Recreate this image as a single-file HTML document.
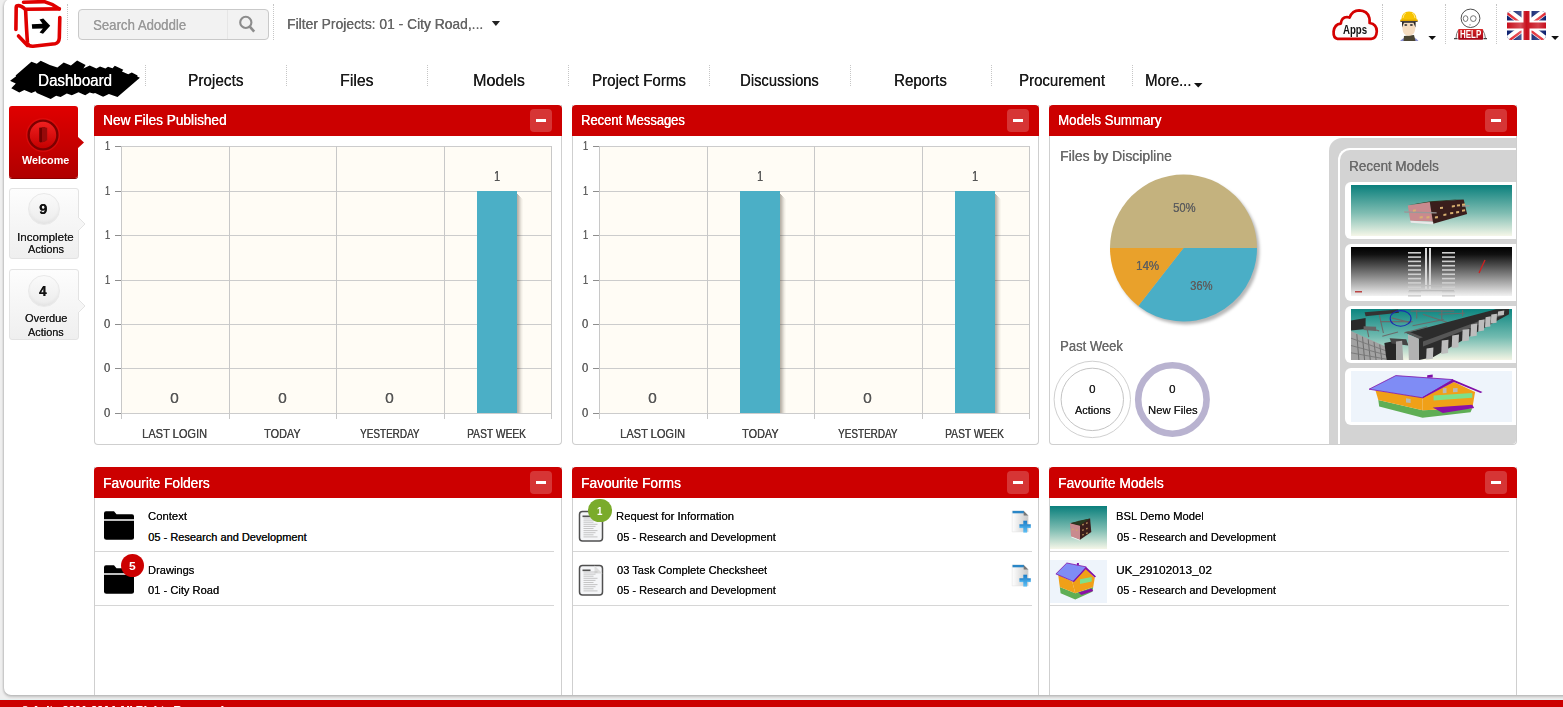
<!DOCTYPE html>
<html><head><meta charset="utf-8"><style>
*{box-sizing:border-box;margin:0;padding:0}
html,body{width:1563px;height:707px;overflow:hidden;background:#efefef;font-family:"Liberation Sans",sans-serif;position:relative}
.tx{position:absolute;white-space:nowrap;transform-origin:0 0;text-shadow:0.3px 0 0}
.a{position:absolute}
svg{position:absolute;overflow:visible}
.dots{position:absolute;width:0;border-left:1px dotted #c6c6c6}
.panel{position:absolute;background:#fff;border:1px solid #cfcfcf;border-top:0}
.ph{position:absolute;left:-1px;right:-1px;top:0;height:31px;background:#cc0000;border-radius:4px 4px 0 0}
.ph .b{position:absolute;right:10px;top:4px;width:22px;height:23px;background:#d63535;border-radius:4px}
.ph .b:after{content:"";position:absolute;left:6px;top:10px;width:10px;height:3px;background:#fff}
</style></head><body>
<div class="a" style="left:4px;top:-1px;width:1600px;height:696px;background:#fff;border-radius:7px;box-shadow:-1px 0 2px rgba(0,0,0,.12), 0 2px 3px rgba(0,0,0,.2)"></div>
<div class="a" style="left:0;top:699px;width:1563px;height:1px;background:#e4f0f0"></div>
<div class="a" style="left:0;top:700px;width:1563px;height:7px;background:#cc0000;overflow:hidden"></div>
<div class="tx" style="left:20.83px;top:704.20px;font-size:12px;line-height:14px;color:#fff;font-weight:bold;text-shadow:0.12px 0 0;transform:scaleX(0.9305);">© Asite 2001-2014 All Rights Reserved</div>
<div class="a" style="left:78px;top:9px;width:191px;height:31px;background:#f2f2f2;border:1px solid #c9c9c9;border-radius:4px"></div>
<div class="a" style="left:227px;top:10px;width:1px;height:29px;background:#e6e6e6"></div>
<svg style="left:0;top:0" width="70" height="52" viewBox="0 0 70 52">
 <g fill="none" stroke="#e00000" stroke-width="3.6" stroke-linecap="round" stroke-linejoin="round">
  <path d="M23.5,2.3 L44,1.6 Q52,3.5 59.3,8.9"/>
  <path d="M16.6,6 Q20,4.5 25.2,9.3 L59.3,8.9"/>
  <path d="M16.2,7 L15.9,29.5"/>
  <path d="M18.5,36 L27.5,45.4"/>
  <path d="M25.6,10 Q26.5,30 27.5,43 Q28,46.5 33,46.3 L55,43.8 Q59,43 59.3,38 L59.8,17.5"/>
 </g>
 <path d="M31.8,24.3 L42.5,23.8 L39.5,19.6 L43.3,18.6 L50.2,25.8 L43,33.8 L39.6,32.5 L42.8,28.5 L32.2,28.8 Z" fill="#000"/>
</svg>
<svg style="left:236px;top:13px" width="22" height="24" viewBox="0 0 22 24">
 <circle cx="9.8" cy="9.4" r="5.6" fill="none" stroke="#8c8c8c" stroke-width="2.1"/>
 <path d="M13.8,13.6 L18.2,18.6" stroke="#8c8c8c" stroke-width="2.6" stroke-linecap="butt"/>
</svg>
<svg style="left:490px;top:19px" width="12" height="9"><path d="M1.8,2 L10,2 L5.9,7 Z" fill="#222"/></svg>

<svg style="left:0;top:0" width="1563" height="50">
 <path d="M1337.5,38.8 Q1333.2,38 1333.6,31.5 Q1334.5,24.2 1340.8,23.6 Q1341.5,17.2 1347,17 Q1348.6,17 1349.6,17.6 Q1352.3,10.4 1359.2,10.4 Q1367.5,10.7 1369.3,17.8 Q1369.8,20 1369.6,23 Q1376.8,24.2 1376.8,31.2 Q1376.4,38.6 1371.2,38.8 Z" fill="#fcfcfc" stroke="#d40000" stroke-width="2.7" stroke-linejoin="round"/>
</svg>

<svg style="left:0;top:0" width="1563" height="50">
 <path d="M1400,41 Q1402,38.5 1405,37.5 L1414,37.5 Q1417,38.5 1418.5,41 Z" fill="#8d92d2"/>
 <path d="M1404,36 L1414,35 L1415.5,41 L1403.5,41 Z" fill="#4b4532"/>
 <path d="M1402.2,21.5 L1415.4,21.5 L1415.2,29 Q1414.5,35.8 1408.8,35.8 Q1403,35.8 1402.5,29 Z" fill="#f5dcc0"/>
 <path d="M1402,21.5 L1415.6,21.5 L1415.6,27.5 L1414.2,24.5 L1413.5,22.8 L1404,22.8 L1403.2,24.5 L1402,27.5 Z" fill="#2a2a2a"/>
 <ellipse cx="1405.8" cy="25" rx="1.5" ry="1.1" fill="#444"/>
 <ellipse cx="1411.4" cy="25" rx="1.5" ry="1.1" fill="#444"/>
 <path d="M1401.2,20 Q1401.5,11.8 1409,11.6 Q1416.5,11.8 1416.8,20 Z" fill="#f7c300"/>
 <path d="M1403,18 Q1403.5,13.5 1406,12.8 M1415,18 Q1414.5,13.5 1412,12.8" stroke="#fff3b0" stroke-width=".8" fill="none"/>
 <rect x="1400.2" y="19.6" width="17.6" height="1.9" fill="#e0a800"/>
 <rect x="1400.5" y="21.2" width="17" height=".8" fill="#2a2a40"/>
</svg>
<svg style="left:1427px;top:35px" width="11" height="7"><path d="M1.4,1 L9,1 L5.2,5 Z" fill="#111"/></svg>
<svg style="left:0;top:0" width="1563" height="50">
 <defs><linearGradient id="hg" x1="0" y1="0" x2="0" y2="1"><stop offset="0" stop-color="#d82828"/><stop offset="1" stop-color="#a00012"/></linearGradient></defs>
 <path d="M1458.5,30 Q1456,33 1456,38.5 M1482.5,30 Q1485,33 1485.5,38.5" stroke="#777" stroke-width="1" fill="none"/>
 <path d="M1454,38.6 L1457.5,38.6 M1483.5,38.6 L1487,38.6" stroke="#444" stroke-width="1.2"/>
 <ellipse cx="1470.5" cy="18.3" rx="9.4" ry="9.2" fill="#fff" stroke="#3a3a3a" stroke-width="0.9"/>
 <ellipse cx="1465.6" cy="18.6" rx="2.3" ry="2.9" fill="none" stroke="#666" stroke-width="0.9"/>
 <ellipse cx="1473.3" cy="18.6" rx="2.8" ry="2.9" fill="none" stroke="#666" stroke-width="0.9"/>
 <rect x="1469" y="24" width="2" height="1.6" fill="#ccc"/>
 <rect x="1458.2" y="29" width="24.9" height="10.8" rx="0.8" fill="url(#hg)"/>
</svg>
<svg style="left:1507px;top:11px" width="40" height="30" viewBox="0 0 40 30">
 <defs><clipPath id="fc"><rect x="0" y="0" width="39" height="29" rx="4.5"/></clipPath>
 <linearGradient id="fg" x1="0" y1="0" x2="1" y2="0"><stop offset="0" stop-color="#fff" stop-opacity="0"/><stop offset=".35" stop-color="#fff" stop-opacity=".25"/><stop offset=".5" stop-color="#fff" stop-opacity="0"/><stop offset=".8" stop-color="#fff" stop-opacity=".2"/><stop offset="1" stop-color="#fff" stop-opacity="0"/></linearGradient></defs>
 <g clip-path="url(#fc)">
  <rect width="39" height="29" fill="#0a1e6e"/>
  <path d="M0,0 L39,29 M39,0 L0,29" stroke="#fff" stroke-width="7"/>
  <path d="M0,0 L19.5,14.5 M39,29 L19.5,14.5" stroke="#e0202a" stroke-width="2.4" transform="translate(-1.2,1.2)"/>
  <path d="M39,0 L19.5,14.5 M0,29 L19.5,14.5" stroke="#e0202a" stroke-width="2.4" transform="translate(1.2,1.2)"/>
  <path d="M19.5,0 L19.5,29 M0,14.5 L39,14.5" stroke="#fff" stroke-width="10"/>
  <path d="M19.5,0 L19.5,29 M0,14.5 L39,14.5" stroke="#c8101e" stroke-width="6"/>
  <rect width="39" height="29" fill="url(#fg)"/>
 </g>
</svg>
<svg style="left:1550px;top:35px" width="11" height="7"><path d="M1.2,1 L9,1 L5.1,5 Z" fill="#111"/></svg>

<div class="tx" style="left:1460.48px;top:29.40px;font-size:10px;line-height:11px;color:#fff;font-weight:bold;text-shadow:0.12px 0 0;transform:scaleX(0.7938);text-shadow:none;">HELP</div>
<div class="tx" style="left:1343.26px;top:22.60px;font-size:12px;line-height:14px;color:#111;font-weight:bold;text-shadow:0.12px 0 0;transform:scaleX(0.8042);text-shadow:none;">Apps</div>
<div class="dots" style="left:67px;top:4px;height:36px"></div>
<div class="dots" style="left:273px;top:4px;height:36px"></div>
<div class="dots" style="left:1382px;top:4px;height:36px"></div>
<div class="dots" style="left:1445px;top:4px;height:40px"></div>
<div class="dots" style="left:1496px;top:4px;height:40px"></div>
<div class="tx" style="left:92.51px;top:16.00px;font-size:15px;line-height:17px;color:#9a9a9a;transform:scaleX(0.8780);">Search Adoddle</div>
<div class="tx" style="left:287.39px;top:14.80px;font-size:15px;line-height:17px;color:#666666;transform:scaleX(0.9224);">Filter Projects: 01 - City Road,...</div>
<div class="tx" style="left:188.08px;top:72.00px;font-size:16px;line-height:17px;color:#1a1a1a;transform:scaleX(0.9567);">Projects</div>
<div class="tx" style="left:340.13px;top:72.00px;font-size:16px;line-height:17px;color:#1a1a1a;transform:scaleX(0.9900);">Files</div>
<div class="tx" style="left:472.52px;top:72.00px;font-size:16px;line-height:17px;color:#1a1a1a;transform:scaleX(1.0028);">Models</div>
<div class="tx" style="left:592.09px;top:72.00px;font-size:16px;line-height:17px;color:#1a1a1a;transform:scaleX(0.9421);">Project Forms</div>
<div class="tx" style="left:739.82px;top:72.00px;font-size:16px;line-height:17px;color:#1a1a1a;transform:scaleX(0.9219);">Discussions</div>
<div class="tx" style="left:894.20px;top:72.00px;font-size:16px;line-height:17px;color:#1a1a1a;transform:scaleX(0.9398);">Reports</div>
<div class="tx" style="left:1019.30px;top:72.00px;font-size:16px;line-height:17px;color:#1a1a1a;transform:scaleX(0.9372);">Procurement</div>
<div class="tx" style="left:1145.31px;top:72.00px;font-size:16px;line-height:17px;color:#1a1a1a;transform:scaleX(0.9311);">More...</div>
<div class="dots" style="left:145px;top:65px;height:21px"></div>
<div class="dots" style="left:286px;top:65px;height:21px"></div>
<div class="dots" style="left:427px;top:65px;height:21px"></div>
<div class="dots" style="left:568px;top:65px;height:21px"></div>
<div class="dots" style="left:709px;top:65px;height:21px"></div>
<div class="dots" style="left:850px;top:65px;height:21px"></div>
<div class="dots" style="left:991px;top:65px;height:21px"></div>
<div class="dots" style="left:1132px;top:65px;height:21px"></div>
<svg style="left:0;top:0" width="160" height="110"><polygon points="10.4,80.5 16.2,76.3 15.6,75.6 31.4,61.7 36.8,63.8 40.7,60.8 49.8,65.0 57.4,67.5 63.7,62.6 70.9,65.6 77.1,60.6 85.6,64.9 83.4,68.4 89.7,65.6 96.4,68.4 100.0,66.6 105.4,68.4 108.0,66.8 112.5,68.3 114.8,65.8 123.3,69.8 121.9,71.6 128.2,74.3 131.8,72.5 137.6,75.6 137.2,76.5 139.9,77.8 117.5,97.1 108.9,94.0 103.1,96.7 95.1,93.1 93.3,93.5 89.7,92.6 85.2,95.3 78.5,92.2 71.8,95.3 66.8,93.5 60.6,97.1 56.1,95.8 50.7,98.9 36.8,93.1 35.5,91.3 31.4,93.1 24.3,89.9 19.3,92.6 11.3,88.2 15.8,83.5 10.4,81.0" fill="#000"/></svg>
<svg style="left:1193px;top:82px" width="11" height="7"><path d="M1,1 L9.5,1 L5.25,5.5 Z" fill="#111"/></svg>
<div class="tx" style="left:38.29px;top:71.90px;font-size:16px;line-height:17px;color:#fff;transform:scaleX(0.9444);">Dashboard</div>
<div class="a" style="left:9px;top:106px;width:69px;height:72px;border-radius:3px;background:linear-gradient(#e00000,#b00000);box-shadow:0 1px 0 #8a0000"></div>
<svg style="left:77px;top:135px" width="10" height="16"><path d="M0,1 L7,7.5 L0,14 Z" fill="#c80000"/></svg>
<svg style="left:25px;top:117px" width="36" height="36" viewBox="0 0 36 36"><defs><linearGradient id="wg" x1="0" y1="0" x2="0" y2="1"><stop offset="0" stop-color="#f02020"/><stop offset="1" stop-color="#c40000"/></linearGradient></defs><circle cx="18" cy="18" r="17" fill="#e81414" fill-opacity=".5"/><circle cx="18" cy="18" r="15.6" fill="#7c0000"/><circle cx="18" cy="18" r="13.2" fill="url(#wg)"/><path d="M14.2,10.8 L19.5,10.2 L20.8,11 L20.8,24 L15.5,25.6 L14.2,24.5 Z" fill="#6e0000"/><path d="M17,10.2 L22.2,10.8 L22.2,23.2 L17,25.6 Z" fill="#960a0a"/></svg>
<div class="tx" style="left:21.90px;top:153.70px;font-size:11px;line-height:12px;color:#fff;font-weight:bold;text-shadow:0.12px 0 0;transform:scaleX(0.9835);text-shadow:none;">Welcome</div>
<div class="a" style="left:9px;top:188px;width:70px;height:71px;border-radius:3px;background:linear-gradient(#fdfdfd,#efefef);border:1px solid #e3e3e3"></div>
<svg style="left:78px;top:217.3px" width="10" height="16"><path d="M0,0 L7,7 L0,14" fill="#f6f6f6" stroke="#e3e3e3" stroke-width="1"/></svg>
<div class="a" style="left:27.6px;top:193.3px;width:32px;height:32px;border-radius:50%;background:linear-gradient(#fafafa,#ececec);border:1px solid #e9e9e9;box-shadow:inset 0 -2px 3px rgba(0,0,0,.04)"></div>
<div class="tx" style="left:38.88px;top:200.80px;font-size:14px;line-height:16px;color:#111;font-weight:bold;transform:scaleX(1.0604);">9</div>
<div class="tx" style="left:17.16px;top:231.00px;font-size:11px;line-height:12px;color:#222;text-shadow:0.12px 0 0;transform:scaleX(1.0534);">Incomplete</div>
<div class="tx" style="left:28.30px;top:243.40px;font-size:11px;line-height:12px;color:#222;text-shadow:0.12px 0 0;transform:scaleX(0.9973);">Actions</div>
<div class="a" style="left:9px;top:269px;width:70px;height:71px;border-radius:3px;background:linear-gradient(#fdfdfd,#efefef);border:1px solid #e3e3e3"></div>
<svg style="left:78px;top:299.3px" width="10" height="16"><path d="M0,0 L7,7 L0,14" fill="#f6f6f6" stroke="#e3e3e3" stroke-width="1"/></svg>
<div class="a" style="left:27.6px;top:275.3px;width:32px;height:32px;border-radius:50%;background:linear-gradient(#fafafa,#ececec);border:1px solid #e9e9e9;box-shadow:inset 0 -2px 3px rgba(0,0,0,.04)"></div>
<div class="tx" style="left:39.20px;top:283.10px;font-size:14px;line-height:16px;color:#111;font-weight:bold;transform:scaleX(0.9613);">4</div>
<div class="tx" style="left:24.70px;top:312.30px;font-size:11px;line-height:12px;color:#222;text-shadow:0.12px 0 0;transform:scaleX(1.0050);">Overdue</div>
<div class="tx" style="left:28.40px;top:325.80px;font-size:11px;line-height:12px;color:#222;text-shadow:0.12px 0 0;transform:scaleX(0.9889);">Actions</div>
<div class="panel" style="left:94px;top:105px;width:468px;height:340px;border-radius:0 0 4px 4px"><div class="ph"><span class="b"></span></div></div>
<div class="tx" style="left:103.21px;top:112.20px;font-size:14px;line-height:16px;color:#fff;transform:scaleX(0.9735);">New Files Published</div>
<div class="panel" style="left:572px;top:105px;width:467px;height:340px;border-radius:0 0 4px 4px"><div class="ph"><span class="b"></span></div></div>
<div class="tx" style="left:581.26px;top:112.20px;font-size:14px;line-height:16px;color:#fff;transform:scaleX(0.9261);">Recent Messages</div>
<div class="panel" style="left:1049px;top:105px;width:468px;height:340px;border-radius:0 0 4px 4px"><div class="ph"><span class="b"></span></div></div>
<div class="tx" style="left:1058.44px;top:112.20px;font-size:14px;line-height:16px;color:#fff;transform:scaleX(0.9490);">Models Summary</div>
<div class="panel" style="left:94px;top:467px;width:468px;height:228px;border-bottom:0;border-radius:0 0 0 0"><div class="ph"><span class="b"></span></div></div>
<div class="tx" style="left:103.40px;top:475.00px;font-size:14px;line-height:16px;color:#fff;transform:scaleX(0.9785);">Favourite Folders</div>
<div class="panel" style="left:572px;top:467px;width:467px;height:228px;border-bottom:0;border-radius:0 0 0 0"><div class="ph"><span class="b"></span></div></div>
<div class="tx" style="left:581.40px;top:475.00px;font-size:14px;line-height:16px;color:#fff;transform:scaleX(0.9790);">Favourite Forms</div>
<div class="panel" style="left:1049px;top:467px;width:468px;height:228px;border-bottom:0;border-radius:0 0 0 0"><div class="ph"><span class="b"></span></div></div>
<div class="tx" style="left:1058.40px;top:475.00px;font-size:14px;line-height:16px;color:#fff;transform:scaleX(0.9833);">Favourite Models</div>
<svg style="left:0;top:0" width="1563" height="450"><rect x="121" y="146" width="430" height="267" fill="#fffcf5"/><rect x="121" y="146" width="431" height="1" fill="#cccccc"/><rect x="115" y="146" width="6" height="1" fill="#8e8e8e"/><rect x="121" y="191" width="431" height="1" fill="#cccccc"/><rect x="115" y="191" width="6" height="1" fill="#8e8e8e"/><rect x="121" y="235" width="431" height="1" fill="#cccccc"/><rect x="115" y="235" width="6" height="1" fill="#8e8e8e"/><rect x="121" y="280" width="431" height="1" fill="#cccccc"/><rect x="115" y="280" width="6" height="1" fill="#8e8e8e"/><rect x="121" y="324" width="431" height="1" fill="#cccccc"/><rect x="115" y="324" width="6" height="1" fill="#8e8e8e"/><rect x="121" y="368" width="431" height="1" fill="#cccccc"/><rect x="115" y="368" width="6" height="1" fill="#8e8e8e"/><rect x="121" y="413" width="431" height="1" fill="#cccccc"/><rect x="115" y="413" width="6" height="1" fill="#8e8e8e"/><rect x="121" y="146" width="1" height="273" fill="#c8c8c8"/><rect x="229" y="146" width="1" height="273" fill="#c8c8c8"/><rect x="336" y="146" width="1" height="273" fill="#c8c8c8"/><rect x="444" y="146" width="1" height="273" fill="#c8c8c8"/><rect x="551" y="146" width="1" height="273" fill="#c8c8c8"/><rect x="517" y="194" width="1" height="219" fill="#3a3020" fill-opacity="0.36"/><rect x="518" y="195" width="1" height="218" fill="#3a3020" fill-opacity="0.3"/><rect x="519" y="196" width="1" height="217" fill="#3a3020" fill-opacity="0.22"/><rect x="520" y="197" width="1" height="216" fill="#3a3020" fill-opacity="0.14"/><rect x="521" y="198" width="1" height="215" fill="#3a3020" fill-opacity="0.07"/><rect x="522" y="199" width="1" height="214" fill="#3a3020" fill-opacity="0.03"/><rect x="477" y="191" width="40" height="222" fill="#4bafc6"/></svg>
<div class="tx" style="left:104.71px;top:139.00px;font-size:12px;line-height:14px;color:#606060;text-shadow:0.12px 0 0;transform:scaleX(0.7663);">1</div>
<div class="tx" style="left:104.71px;top:184.00px;font-size:12px;line-height:14px;color:#606060;text-shadow:0.12px 0 0;transform:scaleX(0.7663);">1</div>
<div class="tx" style="left:104.71px;top:228.00px;font-size:12px;line-height:14px;color:#606060;text-shadow:0.12px 0 0;transform:scaleX(0.7663);">1</div>
<div class="tx" style="left:104.71px;top:273.00px;font-size:12px;line-height:14px;color:#606060;text-shadow:0.12px 0 0;transform:scaleX(0.7663);">1</div>
<div class="tx" style="left:104.35px;top:317.30px;font-size:12px;line-height:14px;color:#606060;text-shadow:0.12px 0 0;transform:scaleX(0.9375);">0</div>
<div class="tx" style="left:104.35px;top:361.30px;font-size:12px;line-height:14px;color:#606060;text-shadow:0.12px 0 0;transform:scaleX(0.9375);">0</div>
<div class="tx" style="left:104.35px;top:406.30px;font-size:12px;line-height:14px;color:#606060;text-shadow:0.12px 0 0;transform:scaleX(0.9375);">0</div>
<div class="tx" style="left:142.26px;top:425.70px;font-size:13px;line-height:15px;color:#444;transform:scaleX(0.8514);">LAST LOGIN</div>
<div class="tx" style="left:264.03px;top:425.70px;font-size:13px;line-height:15px;color:#444;transform:scaleX(0.8366);">TODAY</div>
<div class="tx" style="left:360.00px;top:425.70px;font-size:13px;line-height:15px;color:#444;transform:scaleX(0.7647);">YESTERDAY</div>
<div class="tx" style="left:467.43px;top:425.70px;font-size:13px;line-height:15px;color:#444;transform:scaleX(0.7897);">PAST WEEK</div>
<div class="tx" style="left:170.38px;top:388.80px;font-size:15px;line-height:17px;color:#555;transform:scaleX(1.0417);">0</div>
<div class="tx" style="left:277.88px;top:388.80px;font-size:15px;line-height:17px;color:#555;transform:scaleX(1.0417);">0</div>
<div class="tx" style="left:385.38px;top:388.80px;font-size:15px;line-height:17px;color:#555;transform:scaleX(1.0417);">0</div>
<div class="tx" style="left:494.16px;top:167.00px;font-size:15px;line-height:17px;color:#555;transform:scaleX(0.7050);">1</div>
<svg style="left:0;top:0" width="1563" height="450"><rect x="599" y="146" width="430" height="267" fill="#fffcf5"/><rect x="599" y="146" width="431" height="1" fill="#cccccc"/><rect x="593" y="146" width="6" height="1" fill="#8e8e8e"/><rect x="599" y="191" width="431" height="1" fill="#cccccc"/><rect x="593" y="191" width="6" height="1" fill="#8e8e8e"/><rect x="599" y="235" width="431" height="1" fill="#cccccc"/><rect x="593" y="235" width="6" height="1" fill="#8e8e8e"/><rect x="599" y="280" width="431" height="1" fill="#cccccc"/><rect x="593" y="280" width="6" height="1" fill="#8e8e8e"/><rect x="599" y="324" width="431" height="1" fill="#cccccc"/><rect x="593" y="324" width="6" height="1" fill="#8e8e8e"/><rect x="599" y="368" width="431" height="1" fill="#cccccc"/><rect x="593" y="368" width="6" height="1" fill="#8e8e8e"/><rect x="599" y="413" width="431" height="1" fill="#cccccc"/><rect x="593" y="413" width="6" height="1" fill="#8e8e8e"/><rect x="599" y="146" width="1" height="273" fill="#c8c8c8"/><rect x="707" y="146" width="1" height="273" fill="#c8c8c8"/><rect x="814" y="146" width="1" height="273" fill="#c8c8c8"/><rect x="922" y="146" width="1" height="273" fill="#c8c8c8"/><rect x="1029" y="146" width="1" height="273" fill="#c8c8c8"/><rect x="780" y="194" width="1" height="219" fill="#3a3020" fill-opacity="0.36"/><rect x="781" y="195" width="1" height="218" fill="#3a3020" fill-opacity="0.3"/><rect x="782" y="196" width="1" height="217" fill="#3a3020" fill-opacity="0.22"/><rect x="783" y="197" width="1" height="216" fill="#3a3020" fill-opacity="0.14"/><rect x="784" y="198" width="1" height="215" fill="#3a3020" fill-opacity="0.07"/><rect x="785" y="199" width="1" height="214" fill="#3a3020" fill-opacity="0.03"/><rect x="740" y="191" width="40" height="222" fill="#4bafc6"/><rect x="995" y="194" width="1" height="219" fill="#3a3020" fill-opacity="0.36"/><rect x="996" y="195" width="1" height="218" fill="#3a3020" fill-opacity="0.3"/><rect x="997" y="196" width="1" height="217" fill="#3a3020" fill-opacity="0.22"/><rect x="998" y="197" width="1" height="216" fill="#3a3020" fill-opacity="0.14"/><rect x="999" y="198" width="1" height="215" fill="#3a3020" fill-opacity="0.07"/><rect x="1000" y="199" width="1" height="214" fill="#3a3020" fill-opacity="0.03"/><rect x="955" y="191" width="40" height="222" fill="#4bafc6"/></svg>
<div class="tx" style="left:582.71px;top:139.00px;font-size:12px;line-height:14px;color:#606060;text-shadow:0.12px 0 0;transform:scaleX(0.7663);">1</div>
<div class="tx" style="left:582.71px;top:184.00px;font-size:12px;line-height:14px;color:#606060;text-shadow:0.12px 0 0;transform:scaleX(0.7663);">1</div>
<div class="tx" style="left:582.71px;top:228.00px;font-size:12px;line-height:14px;color:#606060;text-shadow:0.12px 0 0;transform:scaleX(0.7663);">1</div>
<div class="tx" style="left:582.71px;top:273.00px;font-size:12px;line-height:14px;color:#606060;text-shadow:0.12px 0 0;transform:scaleX(0.7663);">1</div>
<div class="tx" style="left:582.35px;top:317.30px;font-size:12px;line-height:14px;color:#606060;text-shadow:0.12px 0 0;transform:scaleX(0.9375);">0</div>
<div class="tx" style="left:582.35px;top:361.30px;font-size:12px;line-height:14px;color:#606060;text-shadow:0.12px 0 0;transform:scaleX(0.9375);">0</div>
<div class="tx" style="left:582.35px;top:406.30px;font-size:12px;line-height:14px;color:#606060;text-shadow:0.12px 0 0;transform:scaleX(0.9375);">0</div>
<div class="tx" style="left:620.26px;top:425.70px;font-size:13px;line-height:15px;color:#444;transform:scaleX(0.8514);">LAST LOGIN</div>
<div class="tx" style="left:742.03px;top:425.70px;font-size:13px;line-height:15px;color:#444;transform:scaleX(0.8366);">TODAY</div>
<div class="tx" style="left:838.00px;top:425.70px;font-size:13px;line-height:15px;color:#444;transform:scaleX(0.7647);">YESTERDAY</div>
<div class="tx" style="left:945.43px;top:425.70px;font-size:13px;line-height:15px;color:#444;transform:scaleX(0.7897);">PAST WEEK</div>
<div class="tx" style="left:648.38px;top:388.80px;font-size:15px;line-height:17px;color:#555;transform:scaleX(1.0417);">0</div>
<div class="tx" style="left:757.16px;top:167.00px;font-size:15px;line-height:17px;color:#555;transform:scaleX(0.7050);">1</div>
<div class="tx" style="left:863.38px;top:388.80px;font-size:15px;line-height:17px;color:#555;transform:scaleX(1.0417);">0</div>
<div class="tx" style="left:972.16px;top:167.00px;font-size:15px;line-height:17px;color:#555;transform:scaleX(0.7050);">1</div>
<div class="tx" style="left:1059.58px;top:147.80px;font-size:14px;line-height:16px;color:#6a6a6a;transform:scaleX(0.9968);">Files by Discipline</div>
<div class="tx" style="left:1059.56px;top:337.80px;font-size:14px;line-height:16px;color:#6a6a6a;transform:scaleX(0.9323);">Past Week</div>
<svg style="left:0;top:0" width="1563" height="707"><defs><filter id="psh" x="-20%" y="-20%" width="140%" height="140%"><feGaussianBlur stdDeviation="1.6"/></filter></defs><circle cx="1186.0" cy="251" r="73.5" fill="#000" fill-opacity=".28" filter="url(#psh)"/><path d="M1110.0,248 A73.5,73.5 0 0 1 1257.0,248 Z" fill="#c4b27e"/><path d="M1183.5,248 L1257.0,248 A73.5,73.5 0 0 1 1138.25,305.92 Z" fill="#4aaec6"/><path d="M1183.5,248 L1138.25,305.92 A73.5,73.5 0 0 1 1110.0,248 Z" fill="#e9a12b"/><circle cx="1092.3" cy="399.4" r="38.2" fill="none" stroke="#d0d0d0" stroke-width="1"/><circle cx="1092.3" cy="399.4" r="31.2" fill="none" stroke="#c4c4c4" stroke-width="1"/><circle cx="1172.4" cy="399.5" r="34.2" fill="none" stroke="#b9b3d0" stroke-width="6.6"/></svg>
<div class="tx" style="left:1172.85px;top:199.90px;font-size:13px;line-height:15px;color:#5e5e5e;transform:scaleX(0.8671);">50%</div>
<div class="tx" style="left:1135.64px;top:258.00px;font-size:13px;line-height:15px;color:#5e5e5e;transform:scaleX(0.8832);">14%</div>
<div class="tx" style="left:1189.75px;top:278.00px;font-size:13px;line-height:15px;color:#5e5e5e;transform:scaleX(0.8631);">36%</div>
<div class="tx" style="left:1089.09px;top:383.40px;font-size:11px;line-height:12px;color:#222;text-shadow:0.12px 0 0;transform:scaleX(1.0417);">0</div>
<div class="tx" style="left:1169.29px;top:383.40px;font-size:11px;line-height:12px;color:#222;text-shadow:0.12px 0 0;transform:scaleX(1.0417);">0</div>
<div class="tx" style="left:1075.20px;top:403.80px;font-size:11px;line-height:12px;color:#222;text-shadow:0.12px 0 0;transform:scaleX(0.9889);">Actions</div>
<div class="tx" style="left:1148.00px;top:403.80px;font-size:11px;line-height:12px;color:#222;text-shadow:0.12px 0 0;transform:scaleX(1.0271);">New Files</div>
<div class="a" style="left:1329px;top:138px;width:187px;height:306px;background:#d3d3d3;border-radius:13px 0 4px 0;overflow:hidden"><div class="a" style="left:9px;top:10px;width:200px;height:320px;border-left:2px solid #fff;border-top:2px solid #fff;border-radius:12px 0 0 0"></div></div>
<div class="tx" style="left:1348.52px;top:157.90px;font-size:14px;line-height:16px;color:#6a6a6a;transform:scaleX(0.9600);">Recent Models</div>
<div class="a" style="left:1345px;top:182px;width:171px;height:57px;background:#fff;border-radius:6px 0 0 6px"></div>
<div class="a" style="left:1345px;top:244px;width:171px;height:57px;background:#fff;border-radius:6px 0 0 6px"></div>
<div class="a" style="left:1345px;top:306px;width:171px;height:57px;background:#fff;border-radius:6px 0 0 6px"></div>
<div class="a" style="left:1345px;top:368px;width:171px;height:57px;background:#fff;border-radius:6px 0 0 6px"></div>
<svg style="left:0;top:0" width="1563" height="707"><defs><linearGradient id="ga" x1="0" y1="0" x2="0" y2="1"><stop offset="0" stop-color="#0a7f7c"/><stop offset=".55" stop-color="#7fbdb2"/><stop offset="1" stop-color="#f5f6e8"/></linearGradient></defs><rect x="1351" y="185" width="161" height="51" fill="url(#ga)"/><polygon points="1408.6,205.1 1430.7,201.2 1463.7,198.9 1440.0,201.7" fill="#2a3a20" /><polygon points="1407.8,205.4 1429.8,202.0 1433.2,221.6 1410.3,220.7" fill="#c98a8e" /><polygon points="1429.8,202.0 1463.7,199.4 1467.1,213.9 1433.2,223.8" fill="#3a1e1c" /><polygon points="1410.3,220.7 1433.2,222.1 1433.2,224.4 1410.8,222.7" fill="#e8e8e8" /><polygon points="1404.0,211.3 1436.6,212.2 1436.6,213.6 1404.4,212.7" fill="#999" /><polygon points="1462.0,205.4 1469.6,205.1 1469.6,206.4 1462.0,206.8" fill="#999" /><polygon points="1440.0,207.1 1443.0,206.8 1443.0,208.8 1440.0,209.1" fill="#d8b070" /><polygon points="1451.8,205.4 1454.9,205.1 1454.9,207.1 1451.8,207.4" fill="#d8b070" /><polygon points="1456.9,204.6 1460.0,204.2 1460.0,206.2 1456.9,206.6" fill="#d8b070" /><polygon points="1462.0,203.7 1465.1,203.4 1465.1,205.4 1462.0,205.7" fill="#d8b070" /><polygon points="1443.4,213.9 1446.4,213.6 1446.4,215.6 1443.4,215.9" fill="#d8b070" /><polygon points="1450.1,212.2 1453.2,211.9 1453.2,213.9 1450.1,214.2" fill="#d8b070" /><polygon points="1456.1,211.3 1459.1,211.0 1459.1,213.1 1456.1,213.4" fill="#d8b070" /><polygon points="1462.0,209.7 1465.1,209.3 1465.1,211.3 1462.0,211.7" fill="#d8b070" /><polygon points="1434.9,216.4 1437.9,216.1 1437.9,218.2 1434.9,218.5" fill="#d8b070" /><polygon points="1426.4,216.4 1429.5,216.1 1429.5,218.2 1426.4,218.5" fill="#d8b070" /><polygon points="1412.9,209.7 1415.9,209.3 1415.9,211.3 1412.9,211.7" fill="#d8b070" /><polygon points="1419.6,216.4 1422.7,216.1 1422.7,218.2 1419.6,218.5" fill="#d8b070" /></svg>
<svg style="left:0;top:0" width="1563" height="707"><defs><linearGradient id="gp" x1="0" y1="0" x2="0" y2="1"><stop offset="0" stop-color="#000"/><stop offset=".15" stop-color="#111"/><stop offset="1" stop-color="#f2f2f2"/></linearGradient></defs><rect x="1351" y="247" width="161" height="49" fill="url(#gp)"/><rect x="1408" y="252.0" width="13" height="1.6" fill="#cfcfcf"/><rect x="1442" y="252.0" width="13" height="1.6" fill="#cfcfcf"/><rect x="1408" y="256.3" width="13" height="1.6" fill="#cfcfcf"/><rect x="1442" y="256.3" width="13" height="1.6" fill="#cfcfcf"/><rect x="1408" y="260.6" width="13" height="1.6" fill="#cfcfcf"/><rect x="1442" y="260.6" width="13" height="1.6" fill="#cfcfcf"/><rect x="1408" y="264.9" width="13" height="1.6" fill="#cfcfcf"/><rect x="1442" y="264.9" width="13" height="1.6" fill="#cfcfcf"/><rect x="1408" y="269.2" width="13" height="1.6" fill="#cfcfcf"/><rect x="1442" y="269.2" width="13" height="1.6" fill="#cfcfcf"/><rect x="1408" y="273.5" width="13" height="1.6" fill="#cfcfcf"/><rect x="1442" y="273.5" width="13" height="1.6" fill="#cfcfcf"/><rect x="1408" y="277.8" width="13" height="1.6" fill="#cfcfcf"/><rect x="1442" y="277.8" width="13" height="1.6" fill="#cfcfcf"/><rect x="1408" y="282.1" width="13" height="1.6" fill="#cfcfcf"/><rect x="1442" y="282.1" width="13" height="1.6" fill="#cfcfcf"/><rect x="1408" y="286.4" width="13" height="1.6" fill="#cfcfcf"/><rect x="1442" y="286.4" width="13" height="1.6" fill="#cfcfcf"/><rect x="1408" y="290.7" width="13" height="1.6" fill="#cfcfcf"/><rect x="1442" y="290.7" width="13" height="1.6" fill="#cfcfcf"/><rect x="1408" y="295.0" width="13" height="1.6" fill="#cfcfcf"/><rect x="1442" y="295.0" width="13" height="1.6" fill="#cfcfcf"/><rect x="1425" y="248" width="2" height="41" fill="#d8d8d8"/><rect x="1429" y="248" width="2" height="41" fill="#d8d8d8"/><rect x="1409" y="285" width="45" height="1.2" fill="#bbb"/><rect x="1409" y="290" width="45" height="1.2" fill="#bbb"/><path d="M1485,260 L1479,273" stroke="#d02020" stroke-width="1.3"/><rect x="1355" y="291" width="7" height="1.5" fill="#b44"/></svg>
<svg style="left:0;top:0" width="1563" height="707"><defs><linearGradient id="gs" x1="0" y1="0" x2="0" y2="1"><stop offset="0" stop-color="#0c8580"/><stop offset=".55" stop-color="#72bbb0"/><stop offset="1" stop-color="#f3f4e4"/></linearGradient><clipPath id="cs"><rect x="1351" y="309" width="161" height="51"/></clipPath></defs><rect x="1351" y="309" width="161" height="51" fill="url(#gs)"/><g clip-path="url(#cs)"><line x1="1379.2" y1="314.3" x2="1383.4" y2="333.0" stroke="#6a6a6a" stroke-width="1.1"/><line x1="1380.2" y1="321.6" x2="1412.6" y2="321.6" stroke="#6a6a6a" stroke-width="1.1"/><line x1="1391.7" y1="317.9" x2="1410.5" y2="322.6" stroke="#6a6a6a" stroke-width="1.1"/><line x1="1410.5" y1="311.1" x2="1454.3" y2="311.1" stroke="#6a6a6a" stroke-width="1.1"/><line x1="1416.7" y1="310.1" x2="1416.7" y2="318.4" stroke="#6a6a6a" stroke-width="1.1"/><line x1="1404.2" y1="333.0" x2="1427.2" y2="326.8" stroke="#6a6a6a" stroke-width="1.1"/><line x1="1382.3" y1="336.2" x2="1398.0" y2="332.0" stroke="#6a6a6a" stroke-width="1.1"/><line x1="1363.6" y1="326.8" x2="1379.2" y2="330.9" stroke="#6a6a6a" stroke-width="1.1"/><line x1="1412.6" y1="325.7" x2="1443.8" y2="319.5" stroke="#6a6a6a" stroke-width="1.1"/><line x1="1438.6" y1="314.3" x2="1464.7" y2="313.2" stroke="#6a6a6a" stroke-width="1.1"/><line x1="1423.0" y1="314.3" x2="1454.3" y2="324.7" stroke="#6a6a6a" stroke-width="1.1"/><line x1="1462.6" y1="310.1" x2="1462.6" y2="316.3" stroke="#6a6a6a" stroke-width="1.1"/><line x1="1441.8" y1="310.1" x2="1441.8" y2="319.5" stroke="#6a6a6a" stroke-width="1.1"/><line x1="1366.7" y1="326.8" x2="1368.8" y2="337.2" stroke="#6a6a6a" stroke-width="1.1"/><polygon points="1364.6,312.2 1398.0,309.6 1399.0,312.7 1365.6,316.3" fill="#333" /><polygon points="1351.0,320.5 1365.6,317.9 1365.6,328.9 1351.0,330.4" fill="#2a2a2a" /><polygon points="1363.6,326.2 1376.1,326.8 1376.1,330.9 1363.6,329.9" fill="#666" /><polygon points="1351.0,330.9 1385.5,346.6 1386.5,360.1 1351.0,360.1" fill="#a2a2a2" /><line x1="1356.8" y1="334.1" x2="1358.9" y2="360.1" stroke="#666" stroke-width="0.9"/><line x1="1362.5" y1="336.7" x2="1364.6" y2="360.1" stroke="#666" stroke-width="0.9"/><line x1="1368.2" y1="339.3" x2="1370.3" y2="360.1" stroke="#666" stroke-width="0.9"/><line x1="1374.0" y1="341.9" x2="1376.1" y2="360.1" stroke="#666" stroke-width="0.9"/><line x1="1379.7" y1="344.5" x2="1381.8" y2="360.1" stroke="#666" stroke-width="0.9"/><line x1="1351.0" y1="338.2" x2="1386.0" y2="350.8" stroke="#777" stroke-width="0.9"/><line x1="1351.0" y1="345.5" x2="1386.0" y2="354.9" stroke="#777" stroke-width="0.9"/><line x1="1351.0" y1="352.8" x2="1386.0" y2="359.1" stroke="#777" stroke-width="0.9"/><polygon points="1384.4,342.9 1395.9,340.8 1396.4,360.1 1386.5,360.1" fill="#262626" /><polygon points="1389.6,338.2 1406.3,339.3 1408.4,345.5 1391.7,343.5" fill="#444" /><polygon points="1395.9,341.4 1402.1,340.8 1403.2,360.1 1396.4,360.1" fill="#a6a6a6" /><polygon points="1406.3,333.0 1496.0,309.3 1509.0,309.0 1509.0,314.3 1493.9,322.6 1433.4,357.0 1418.8,360.1 1418.8,338.2" fill="#2c2c2c" /><polygon points="1423.0,341.4 1503.3,312.2 1504.3,314.8 1423.0,346.6" fill="#565656" /><polygon points="1407.9,334.6 1418.8,338.2 1418.8,360.1 1408.9,360.1" fill="#b2b2b2" /><polygon points="1404.7,332.0 1408.4,331.5 1423.0,337.2 1418.8,338.8" fill="#555" /><polygon points="1426.6,348.5 1433.4,347.6 1432.9,358.8 1426.1,359.6" fill="#bdbdbd" /><polygon points="1441.8,340.6 1448.5,339.8 1448.0,353.0 1441.2,353.9" fill="#bdbdbd" /><polygon points="1452.2,335.4 1459.0,334.6 1458.4,347.3 1451.7,348.1" fill="#bdbdbd" /><polygon points="1462.6,329.7 1469.4,328.9 1468.9,340.5 1462.1,341.4" fill="#bdbdbd" /><polygon points="1471.0,324.5 1477.2,323.6 1476.7,335.8 1470.4,336.7" fill="#bdbdbd" /><polygon points="1478.8,320.3 1484.5,319.5 1484.0,330.6 1478.3,331.5" fill="#bdbdbd" /><polygon points="1485.6,317.2 1490.8,316.3 1490.3,326.5 1485.0,327.3" fill="#bdbdbd" /><polygon points="1491.3,314.6 1497.0,313.7 1496.5,322.8 1490.8,323.6" fill="#bdbdbd" /><polygon points="1498.1,311.4 1504.3,310.6 1503.8,315.0 1497.5,315.8" fill="#bdbdbd" /><ellipse cx="1400.6" cy="318.4" rx="10.4" ry="7.8" fill="none" stroke="#1a2ab0" stroke-width="1.1"/></g></svg>
<svg style="left:0;top:0" width="1563" height="707"><rect x="1351" y="371" width="161" height="51" fill="#eef4fb"/><polygon points="1378.3,400.1 1422.6,410.2 1472.3,408.3 1470.5,412.3 1422.6,417.8 1379.2,406.5" fill="#5fae55" /><polygon points="1375.5,390.5 1422.6,397.4 1422.6,410.2 1378.3,400.1" fill="#f0a018" /><polygon points="1422.6,397.4 1453.9,381.9 1475.1,391.9 1472.3,408.3 1422.6,410.2" fill="#f0a018" /><polygon points="1433.6,395.6 1472.3,392.9 1472.3,397.8 1433.6,400.5" fill="#7ee08a" /><polygon points="1432.7,407.4 1472.3,404.7 1474.2,408.0 1442.8,412.9" fill="#8a10a8" /><polygon points="1369.1,389.2 1395.8,375.6 1453.0,379.6 1422.6,397.8" fill="#7f8cf5" stroke="#8010a8" stroke-width="0.8"/><polygon points="1453.0,379.6 1482.5,391.9 1480.6,392.9 1453.9,381.9 1422.6,398.3 1422.6,397.0" fill="#8010a8" /><polygon points="1427.2,375.2 1432.7,374.6 1432.7,377.4 1427.2,377.7" fill="#8010a8" /><polygon points="1442.8,388.3 1446.5,387.9 1446.5,392.9 1442.8,393.2" fill="#b8b8b8" /><polygon points="1453.0,388.3 1457.6,387.9 1457.6,391.9 1453.0,392.3" fill="#b8b8b8" /><polygon points="1406.0,398.3 1410.6,398.9 1410.6,402.9 1406.0,402.5" fill="#b8b8b8" /></svg>
<div class="a" style="left:95px;top:551px;width:459px;height:1px;background:#d6d6d6"></div>
<div class="a" style="left:573px;top:551px;width:459px;height:1px;background:#d6d6d6"></div>
<div class="a" style="left:1050px;top:551px;width:459px;height:1px;background:#d6d6d6"></div>
<div class="a" style="left:95px;top:605px;width:459px;height:1px;background:#d6d6d6"></div>
<div class="a" style="left:573px;top:605px;width:459px;height:1px;background:#d6d6d6"></div>
<div class="a" style="left:1050px;top:605px;width:459px;height:1px;background:#d6d6d6"></div>
<svg style="left:0;top:0" width="1563" height="707"><path d="M104,513.3 Q104,511.3 106,511.3 L114,511.3 L116.5,514.3 L132,514.3 Q134,514.3 134,516.3 L134,519.3 L104,519.3 Z" fill="#000"/><path d="M104,520.8 L134,520.8 L134,537.3 Q134,539.8 131.5,539.8 L106.5,539.8 Q104,539.8 104,537.3 Z" fill="#000"/></svg>
<svg style="left:0;top:0" width="1563" height="707"><path d="M104,567.3 Q104,565.3 106,565.3 L114,565.3 L116.5,568.3 L132,568.3 Q134,568.3 134,570.3 L134,573.3 L104,573.3 Z" fill="#000"/><path d="M104,574.8 L134,574.8 L134,591.3 Q134,593.8 131.5,593.8 L106.5,593.8 Q104,593.8 104,591.3 Z" fill="#000"/></svg>
<div class="a" style="left:120.5px;top:554.3px;width:23.0px;height:23.0px;border-radius:50%;background:#cc0000"></div><div class="tx" style="left:128.64px;top:559.80px;font-size:11px;line-height:12px;color:#fff;font-weight:bold;text-shadow:0.12px 0 0;transform:scaleX(1.0909);text-shadow:none;">5</div>
<div class="tx" style="left:148.14px;top:509.80px;font-size:11px;line-height:12px;color:#111;text-shadow:0.12px 0 0;transform:scaleX(1.0271);">Context</div>
<div class="tx" style="left:148.26px;top:531.00px;font-size:11px;line-height:12px;color:#111;text-shadow:0.12px 0 0;">05 - Research and Development</div>
<div class="tx" style="left:147.81px;top:563.80px;font-size:11px;line-height:12px;color:#111;text-shadow:0.12px 0 0;transform:scaleX(1.0089);">Drawings</div>
<div class="tx" style="left:148.26px;top:584.30px;font-size:11px;line-height:12px;color:#111;text-shadow:0.12px 0 0;transform:scaleX(1.0111);">01 - City Road</div>
<svg style="left:0;top:0" width="1563" height="707"><rect x="579.5" y="511.5" width="23" height="29.5" rx="3" fill="#f5f6f8" stroke="#505050" stroke-width="1.5"/><path d="M594.5,511.5 L602.5,519.5 L594.5,519.5 Z" fill="#ddd"/><rect x="582.5" y="515.5" width="8" height="1.6" fill="#555"/><rect x="583.5" y="517.5" width="14" height="1" fill="#b4b4b4" fill-opacity=".75"/><rect x="583.5" y="519.6" width="12" height="1" fill="#b4b4b4" fill-opacity=".75"/><rect x="583.5" y="521.7" width="10" height="1" fill="#b4b4b4" fill-opacity=".75"/><rect x="583.5" y="523.8" width="14" height="1" fill="#b4b4b4" fill-opacity=".75"/><rect x="583.5" y="525.9" width="12" height="1" fill="#b4b4b4" fill-opacity=".75"/><rect x="583.5" y="528.0" width="10" height="1" fill="#b4b4b4" fill-opacity=".75"/><rect x="583.5" y="530.1" width="14" height="1" fill="#b4b4b4" fill-opacity=".75"/><rect x="583.5" y="532.2" width="12" height="1" fill="#b4b4b4" fill-opacity=".75"/><rect x="583.5" y="534.3" width="10" height="1" fill="#b4b4b4" fill-opacity=".75"/><rect x="583.5" y="536.4" width="14" height="1" fill="#b4b4b4" fill-opacity=".75"/></svg>
<svg style="left:0;top:0" width="1563" height="707"><rect x="579.5" y="565.5" width="23" height="29.5" rx="3" fill="#f5f6f8" stroke="#505050" stroke-width="1.5"/><path d="M594.5,565.5 L602.5,573.5 L594.5,573.5 Z" fill="#ddd"/><rect x="582.5" y="569.5" width="8" height="1.6" fill="#555"/><rect x="583.5" y="571.5" width="14" height="1" fill="#b4b4b4" fill-opacity=".75"/><rect x="583.5" y="573.6" width="12" height="1" fill="#b4b4b4" fill-opacity=".75"/><rect x="583.5" y="575.7" width="10" height="1" fill="#b4b4b4" fill-opacity=".75"/><rect x="583.5" y="577.8" width="14" height="1" fill="#b4b4b4" fill-opacity=".75"/><rect x="583.5" y="579.9" width="12" height="1" fill="#b4b4b4" fill-opacity=".75"/><rect x="583.5" y="582.0" width="10" height="1" fill="#b4b4b4" fill-opacity=".75"/><rect x="583.5" y="584.1" width="14" height="1" fill="#b4b4b4" fill-opacity=".75"/><rect x="583.5" y="586.2" width="12" height="1" fill="#b4b4b4" fill-opacity=".75"/><rect x="583.5" y="588.3" width="10" height="1" fill="#b4b4b4" fill-opacity=".75"/><rect x="583.5" y="590.4" width="14" height="1" fill="#b4b4b4" fill-opacity=".75"/></svg>
<div class="a" style="left:588.4000000000001px;top:498.9px;width:23.6px;height:23.6px;border-radius:50%;background:#7aab2b"></div><div class="tx" style="left:597.31px;top:504.70px;font-size:11px;line-height:12px;color:#fff;font-weight:bold;text-shadow:0.12px 0 0;transform:scaleX(0.8897);text-shadow:none;">1</div>
<svg style="left:0;top:0" width="1563" height="707"><defs><linearGradient id="ag" x1="0" y1="0" x2="1" y2="0"><stop offset="0" stop-color="#fff"/><stop offset="1" stop-color="#c8c8c8"/></linearGradient><linearGradient id="pg" x1="0" y1="0" x2="0" y2="1"><stop offset="0" stop-color="#1a7cc8"/><stop offset="1" stop-color="#5ec0f5"/></linearGradient></defs><path d="M1012.2,510.9 L1023.7,510.9 L1028.2,515.4 L1028.2,531.9 L1012.2,531.9 Z" fill="url(#ag)" stroke="#e4e4e4" stroke-width=".6"/><rect x="1012.5" y="510.9" width="11.5" height="2.4" fill="#2a86c6"/><path d="M1023.7,510.9 L1028.2,515.4 L1023.7,515.4 Z" fill="#777"/><rect x="1019.4000000000001" y="524.3" width="11.4" height="3.8" fill="url(#pg)"/><rect x="1023.3000000000001" y="520.6999999999999" width="3.8" height="11.9" fill="url(#pg)"/></svg>
<svg style="left:0;top:0" width="1563" height="707"><defs><linearGradient id="ag" x1="0" y1="0" x2="1" y2="0"><stop offset="0" stop-color="#fff"/><stop offset="1" stop-color="#c8c8c8"/></linearGradient><linearGradient id="pg" x1="0" y1="0" x2="0" y2="1"><stop offset="0" stop-color="#1a7cc8"/><stop offset="1" stop-color="#5ec0f5"/></linearGradient></defs><path d="M1012.2,564.9 L1023.7,564.9 L1028.2,569.4 L1028.2,585.9 L1012.2,585.9 Z" fill="url(#ag)" stroke="#e4e4e4" stroke-width=".6"/><rect x="1012.5" y="564.9" width="11.5" height="2.4" fill="#2a86c6"/><path d="M1023.7,564.9 L1028.2,569.4 L1023.7,569.4 Z" fill="#777"/><rect x="1019.4000000000001" y="578.3" width="11.4" height="3.8" fill="url(#pg)"/><rect x="1023.3000000000001" y="574.6999999999999" width="3.8" height="11.9" fill="url(#pg)"/></svg>
<div class="tx" style="left:616.30px;top:509.80px;font-size:11px;line-height:12px;color:#111;text-shadow:0.12px 0 0;transform:scaleX(1.0260);">Request for Information</div>
<div class="tx" style="left:616.76px;top:531.00px;font-size:11px;line-height:12px;color:#111;text-shadow:0.12px 0 0;transform:scaleX(1.0022);">05 - Research and Development</div>
<div class="tx" style="left:616.76px;top:563.80px;font-size:11px;line-height:12px;color:#111;text-shadow:0.12px 0 0;transform:scaleX(1.0071);">03 Task Complete Checksheet</div>
<div class="tx" style="left:616.76px;top:584.30px;font-size:11px;line-height:12px;color:#111;text-shadow:0.12px 0 0;transform:scaleX(1.0022);">05 - Research and Development</div>
<div class="tx" style="left:1116.40px;top:509.80px;font-size:11px;line-height:12px;color:#111;text-shadow:0.12px 0 0;transform:scaleX(1.0213);">BSL Demo Model</div>
<div class="tx" style="left:1116.86px;top:531.00px;font-size:11px;line-height:12px;color:#111;text-shadow:0.12px 0 0;transform:scaleX(1.0029);">05 - Research and Development</div>
<div class="tx" style="left:1116.41px;top:563.80px;font-size:11px;line-height:12px;color:#111;text-shadow:0.12px 0 0;transform:scaleX(1.0815);">UK_29102013_02</div>
<div class="tx" style="left:1116.86px;top:584.30px;font-size:11px;line-height:12px;color:#111;text-shadow:0.12px 0 0;transform:scaleX(1.0029);">05 - Research and Development</div>
<svg style="left:0;top:0" width="1563" height="707"><defs><linearGradient id="fb" x1="0" y1="0" x2="0" y2="1"><stop offset="0" stop-color="#0a7f7c"/><stop offset=".55" stop-color="#7fbdb2"/><stop offset="1" stop-color="#f5f6e8"/></linearGradient></defs><rect x="1050" y="506" width="57" height="43" fill="url(#fb)"/><polygon points="1070.7,523.3 1090.1,518.4 1091.3,531.9 1080.0,539.7 1071.4,536.1" fill="#3a1e1c" /><polygon points="1069.9,523.3 1080.0,525.7 1080.0,539.7 1071.1,536.5" fill="#c98a8e" /><polygon points="1071.4,536.5 1080.0,539.7 1080.0,540.7 1071.4,537.6" fill="#eee" /><polygon points="1070.7,523.0 1081.5,520.2 1090.1,518.4 1080.0,525.2" fill="#2a3a20" /><polygon points="1082.3,524.1 1083.7,523.8 1083.7,525.2 1082.3,525.5" fill="#d0a868" /><polygon points="1086.2,522.6 1087.6,522.2 1087.6,523.6 1086.2,524.0" fill="#d0a868" /><polygon points="1082.3,529.5 1083.7,529.2 1083.7,530.6 1082.3,530.9" fill="#d0a868" /><polygon points="1086.2,528.0 1087.6,527.7 1087.6,529.1 1086.2,529.4" fill="#d0a868" /><polygon points="1082.3,534.2 1083.7,533.9 1083.7,535.3 1082.3,535.6" fill="#d0a868" /><polygon points="1086.2,532.7 1087.6,532.3 1087.6,533.7 1086.2,534.1" fill="#d0a868" /><polygon points="1072.2,528.8 1073.6,528.5 1073.6,529.9 1072.2,530.2" fill="#d0a868" /><polygon points="1076.1,529.5 1077.5,529.2 1077.5,530.6 1076.1,530.9" fill="#d0a868" /></svg>
<svg style="left:0;top:0" width="1563" height="707"><rect x="1050" y="560" width="57" height="43" fill="#eef4fb"/><polygon points="1059.8,587.1 1075.3,593.3 1093.2,587.1 1092.4,591.8 1075.3,599.5 1060.6,593.3" fill="#5fae55" /><polygon points="1058.2,574.7 1072.2,581.6 1075.3,593.3 1059.8,587.1" fill="#f0a018" /><polygon points="1072.2,581.6 1086.2,568.4 1094.8,577.8 1093.2,587.1 1075.3,593.3" fill="#f0a018" /><polygon points="1080.0,579.3 1091.7,577.0 1091.7,581.6 1080.0,584.0" fill="#7ee08a" /><polygon points="1078.4,592.5 1091.7,588.6 1093.2,591.0 1081.5,594.9" fill="#8a10a8" /><polygon points="1055.9,573.9 1066.8,563.0 1086.2,566.9 1073.8,581.6" fill="#7f8cf5" stroke="#8010a8" stroke-width="0.8"/><polygon points="1086.2,566.9 1096.0,576.5 1094.8,577.4 1085.7,569.2 1073.8,582.1 1073.0,580.9" fill="#8010a8" /><polygon points="1076.9,563.0 1078.9,563.0 1078.9,565.3 1076.9,565.3" fill="#8010a8" /></svg>


</body></html>
